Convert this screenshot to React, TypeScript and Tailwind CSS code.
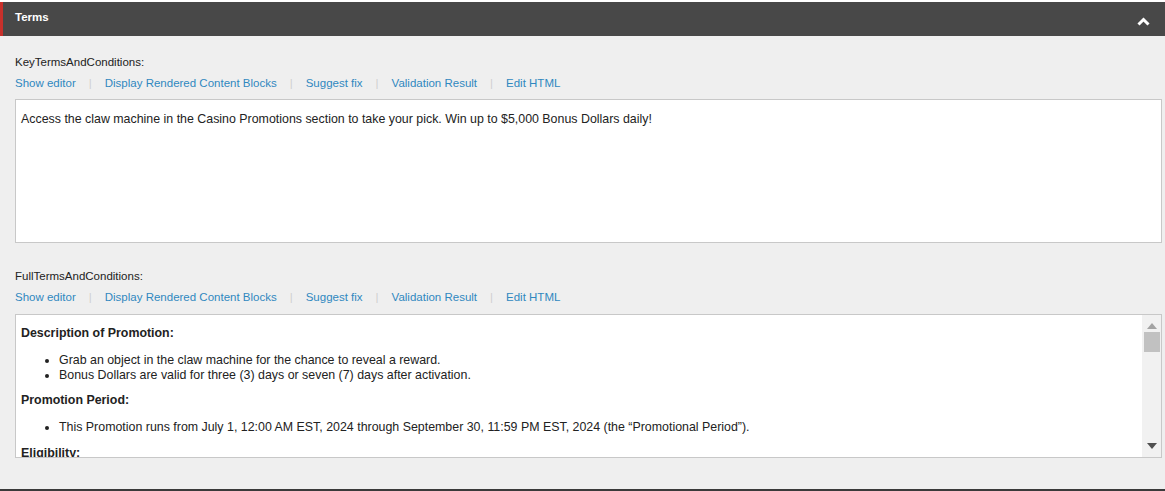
const links = ["Show editor", "Display Rendered Content Blocks", "Suggest fix", "Validation Result", "Edit HTML"];

function LinkBar() {
  return (
    <div className="flex items-center text-[11.5px] leading-[15px] text-[#2f88c0]">
      {links.map((l, i) => (
        <span key={l} className="flex items-center">
          {i > 0 && <span className="px-[13px] text-[#d0d0d0]">|</span>}
          <a className="cursor-pointer">{l}</a>
        </span>
      ))}
    </div>
  );
}

function Scrollbar() {
  return (
    <div className="flex w-[19px] shrink-0 flex-col items-center bg-[#f1f1f1]">
      <svg width="10" height="6" viewBox="0 0 10 6" className="mt-[8px]">
        <polygon points="0,6 5,0 10,6" fill="#a3a3a3" />
      </svg>
      <div className="mt-[3px] h-[20px] w-[16px] bg-[#c1c1c1]" />
      <div className="flex-1" />
      <svg width="10" height="6" viewBox="0 0 10 6" className="mb-[8px]">
        <polygon points="0,0 10,0 5,6" fill="#505050" />
      </svg>
    </div>
  );
}

export default function App() {
  return (
    <div
      className="h-[491px] w-[1165px] bg-white pt-[2px] text-[#222]"
      style={{ fontFamily: '"Liberation Sans", Arial, sans-serif' }}
    >
      <div className="flex h-[34px] items-center justify-between border-l-[3px] border-[#c8302b] bg-[#484848] pl-[12px] pr-[15px]">
        <span className="mb-[2px] text-[11.5px] font-bold text-white">Terms</span>
        <svg width="13" height="9" viewBox="0 0 13 9" className="mt-[4px]">
          <polyline points="1.5,7.5 6.5,2.5 11.5,7.5" fill="none" stroke="white" strokeWidth="3" />
        </svg>
      </div>
      <div className="flex h-[455px] flex-col border-b-2 border-[#3a3a3a] bg-[#efefef] pl-[15px] pr-[3px] pt-[19px] text-[12.4px] leading-[15px]">
        <div className="text-[11.5px]">KeyTermsAndConditions:</div>
        <div className="mt-[6px]">
          <LinkBar />
        </div>
        <div className="mt-[8px] h-[144px] border border-[#c8c8c8] bg-white px-[5px] pt-[12px]">
          Access the claw machine in the Casino Promotions section to take your pick. Win up to $5,000 Bonus Dollars daily!
        </div>
        <div className="mt-[26px] text-[11.5px]">FullTermsAndConditions:</div>
        <div className="mt-[6px]">
          <LinkBar />
        </div>
        <div className="mt-[9px] flex h-[144px] border border-[#c8c8c8] bg-white">
          <div className="flex-1 overflow-hidden px-[5px] pt-[11px]">
            <p className="font-bold">Description of Promotion:</p>
            <ul className="mt-[12px] list-disc pl-[38px]">
              <li>Grab an object in the claw machine for the chance to reveal a reward.</li>
              <li>Bonus Dollars are valid for three (3) days or seven (7) days after activation.</li>
            </ul>
            <p className="mt-[10px] font-bold">Promotion Period:</p>
            <ul className="mt-[12px] list-disc pl-[38px]">
              <li>This Promotion runs from July 1, 12:00 AM EST, 2024 through September 30, 11:59 PM EST, 2024 (the “Promotional Period”).</li>
            </ul>
            <p className="mt-[11px] font-bold">Eligibility:</p>
          </div>
          <Scrollbar />
        </div>
      </div>
    </div>
  );
}
